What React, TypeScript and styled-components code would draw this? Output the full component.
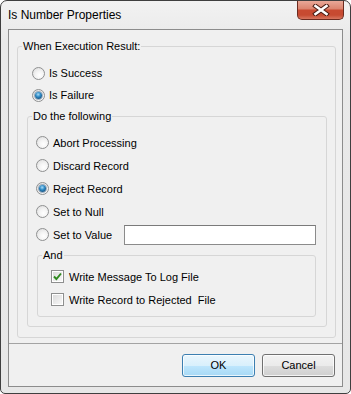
import React from 'react'
import styled, { createGlobalStyle } from 'styled-components'

const GlobalStyle = createGlobalStyle`
  html, body {
    margin: 0;
    padding: 0;
    background: #ffffff;
  }
  body {
    font-family: "Liberation Sans", Arial, sans-serif;
    font-size: 11px;
    color: #000;
  }
`

const Window = styled.div`
  box-sizing: border-box;
  width: 351px;
  height: 394px;
  border: 1px solid #3f3f3f;
  border-radius: 7px 7px 5px 5px;
  background: linear-gradient(#f2f2f2, #e9e9e9 40px, #e7e7e7);
  display: flex;
  flex-direction: column;
  overflow: hidden;
`

const TitleBar = styled.div`
  height: 28px;
  display: flex;
  align-items: flex-start;
  flex-shrink: 0;
`

const Title = styled.div`
  padding: 7px 0 0 7px;
  font-size: 12px;
  line-height: 15px;
  color: #000;
`

const CloseButton = styled.div`
  box-sizing: border-box;
  margin-left: auto;
  margin-right: 6px;
  width: 47px;
  height: 19px;
  border: 1px solid #6b2b20;
  border-top: none;
  border-radius: 0 0 5px 5px;
  background: linear-gradient(#e9a898 0%, #dc8570 42%, #c84a31 52%, #c64a31 78%, #d8765f 100%);
  display: flex;
  align-items: center;
  justify-content: center;
`

const Client = styled.div`
  flex: 1;
  margin: 0 7px 6px 7px;
  border: 1px solid #8c8c8c;
  background: #f0f0f0;
  display: flex;
  flex-direction: column;
`

const Body = styled.div`
  padding: 10px 6px 0 8px;
`

// legend always sits ~5px in from the border, whatever the padding is
const Group = styled.fieldset<{ $pad: string; $pl: number; $ml?: number; $mt?: number }>`
  margin: ${(p) => p.$mt ?? 0}px 0 0 ${(p) => p.$ml ?? 0}px;
  padding: ${(p) => p.$pad};
  padding-left: ${(p) => p.$pl}px;
  border: 1px solid #d6d6d6;
  border-radius: 3px;
  min-width: 0;

  & > legend {
    margin-left: ${(p) => 4 - p.$pl}px;
  }
`

const Legend = styled.legend`
  padding: 0 1px;
  line-height: 13px;
`

const Row = styled.div<{ $h: number; $indent?: number }>`
  height: ${(p) => p.$h}px;
  display: flex;
  align-items: center;
  padding-left: ${(p) => p.$indent ?? 0}px;
`

const Radio = styled.span<{ $on?: boolean }>`
  box-sizing: border-box;
  width: 13px;
  height: 13px;
  border-radius: 50%;
  border: 1px solid #8f9091;
  background: radial-gradient(circle at 60% 65%, #ffffff 0%, #f4f4f4 40%, #d9d9d9 100%);
  display: flex;
  align-items: center;
  justify-content: center;
  flex-shrink: 0;
  margin-right: 4px;

  &::after {
    content: '';
    display: ${(p) => (p.$on ? 'block' : 'none')};
    width: 7px;
    height: 7px;
    border-radius: 50%;
    background: radial-gradient(circle at 45% 35%, #a9dcf7 0%, #2f8bc6 40%, #17507d 80%, #123d5f 100%);
    box-shadow: 0 0 0 1px rgba(30, 70, 110, 0.4);
  }
`

const Check = styled.span`
  box-sizing: border-box;
  width: 13px;
  height: 13px;
  border: 1px solid #8e8f8f;
  padding: 1px;
  background: #fff;
  flex-shrink: 0;
  margin-right: 5px;
  position: relative;

  &::before {
    content: '';
    display: block;
    width: 100%;
    height: 100%;
    background: linear-gradient(135deg, #dcdcdc, #f7f7f7);
  }

  svg {
    position: absolute;
    left: 1px;
    top: 1px;
  }
`

const Label = styled.span`
  white-space: pre;
`

const TextBox = styled.div`
  box-sizing: border-box;
  margin-left: auto;
  width: 192px;
  height: 20px;
  border: 1px solid #8b8b8b;
  border-top-color: #7a7a7a;
  background: #fff;
`

const Separator = styled.div`
  margin-top: 5px;
  border-top: 1px solid #a3a3a3;
`

const ButtonBar = styled.div`
  display: flex;
  justify-content: flex-end;
  gap: 7px;
  padding: 10px 7px 0 0;
`

const Button = styled.div<{ $default?: boolean }>`
  box-sizing: border-box;
  width: 73px;
  height: 23px;
  border-radius: 3px;
  border: 1px solid ${(p) => (p.$default ? '#3c7fb1' : '#707070')};
  background: ${(p) =>
    p.$default
      ? 'linear-gradient(#eaf6fd 0%, #d9f0fc 50%, #bee6fd 51%, #a7d9f5 100%)'
      : 'linear-gradient(#f2f2f2 0%, #ebebeb 50%, #dddddd 51%, #cfcfcf 100%)'};
  box-shadow: inset 0 0 0 1px rgba(255, 255, 255, 0.75);
  display: flex;
  align-items: center;
  justify-content: center;
  line-height: 13px;
`

const CloseGlyph = () => (
  <svg width="18" height="12" viewBox="0 0 18 12">
    <path d="M3.5 2 L14.5 10 M14.5 2 L3.5 10" stroke="#4a1d15" strokeWidth="4.6" strokeLinecap="square" fill="none" />
    <path d="M3.5 2 L14.5 10 M14.5 2 L3.5 10" stroke="#ffffff" strokeWidth="2.6" strokeLinecap="square" fill="none" />
  </svg>
)

const CheckMark = () => (
  <svg width="9" height="9" viewBox="0 0 9 9">
    <path d="M1 4.5 L3.4 7 L8 1.5" stroke="#2f8a1f" strokeWidth="1.9" fill="none" />
  </svg>
)

const App = () => {
  return (
    <>
      <GlobalStyle />
      <Window>
        <TitleBar>
          <Title>Is Number Properties</Title>
          <CloseButton>
            <CloseGlyph />
          </CloseButton>
        </TitleBar>
        <Client>
          <Body>
            <Group $pad="9px 8px 10px" $pl={9}>
              <Legend>When Execution Result:</Legend>
              <Row $h={22} $indent={5}>
                <Radio />
                <Label>Is Success</Label>
              </Row>
              <Row $h={22} $indent={5}>
                <Radio $on />
                <Label>Is Failure</Label>
              </Row>
              <Group $pad="8px 10px 9px" $pl={8} $mt={4}>
                <Legend>Do the following</Legend>
                {App.actions.map((item) => (
                  <Row $h={23} key={item}>
                    <Radio $on={item === 'Reject Record'} />
                    <Label>{item}</Label>
                    {item === 'Set to Value' && <TextBox />}
                  </Row>
                ))}
                <Group $pad="3px 8px 5px" $pl={13} $mt={3} $ml={1}>
                  <Legend>And</Legend>
                  <Row $h={23}>
                    <Check>
                      <CheckMark />
                    </Check>
                    <Label>Write Message To Log File</Label>
                  </Row>
                  <Row $h={23}>
                    <Check />
                    <Label>Write Record to Rejected  File</Label>
                  </Row>
                </Group>
              </Group>
            </Group>
          </Body>
          <Separator />
          <ButtonBar>
            <Button $default>OK</Button>
            <Button>Cancel</Button>
          </ButtonBar>
        </Client>
      </Window>
    </>
  )
}

App.actions = ['Abort Processing', 'Discard Record', 'Reject Record', 'Set to Null', 'Set to Value']

export default App
